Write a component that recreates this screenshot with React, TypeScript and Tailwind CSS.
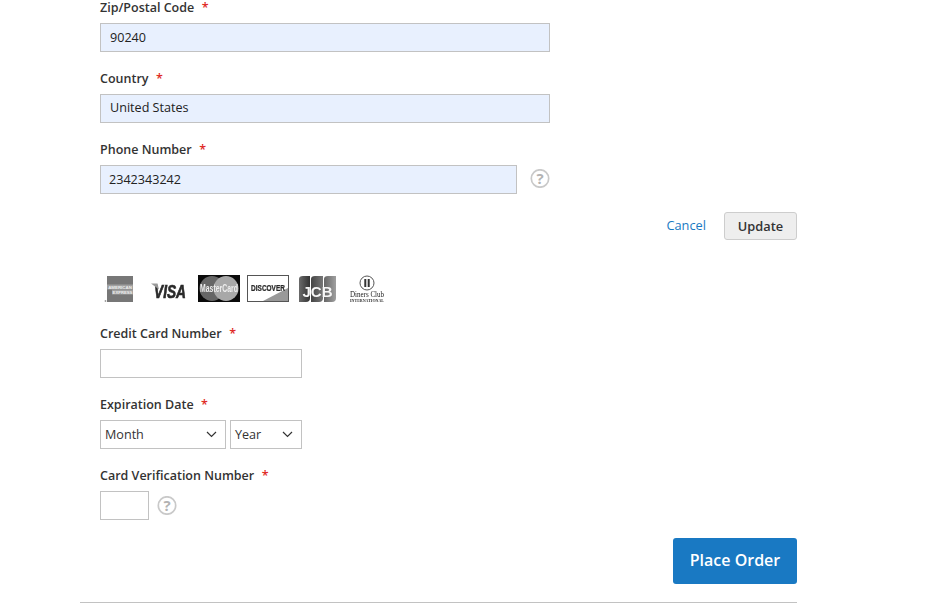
import React from "react";

function Label({ text }: { text: string }) {
  return (
    <div className="h-[16px] flex items-center text-[12.5px] font-semibold leading-[16px] text-[#333]">
      <span>{text}</span>
      <span className="ml-[7.5px] text-[#e02b27]">*</span>
    </div>
  );
}

function Field({ label, value, leading }: { label: string; value: string; leading: string }) {
  return (
    <div className="flex flex-col gap-[7px]">
      <Label text={label} />
      <div className={`w-[450px] h-[29px] border border-[#c2c2c2] bg-[#e8f0fe] pl-[9px] text-[12.6px] ${leading} text-[#222]`}>{value}</div>
    </div>
  );
}

function Help({ className = "" }: { className?: string }) {
  return (
    <svg width="20" height="19" viewBox="0 0 20 19" className={`shrink-0 ${className}`}>
      <circle cx="10" cy="9.5" r="8.7" fill="none" stroke="#c9c9c9" strokeWidth="1.7" />
      <text x="10" y="14.6" textAnchor="middle" fontSize="15" fontWeight="700" fontFamily="Open Sans, sans-serif" fill="#b3b3b3">?</text>
    </svg>
  );
}

function Chevron() {
  return (
    <svg width="11" height="7" viewBox="0 0 11 7" className="shrink-0">
      <path d="M1 1l4.5 4.5L10 1" fill="none" stroke="#333" strokeWidth="1.2" />
    </svg>
  );
}

function Select({ text, width }: { text: string; width: string }) {
  return (
    <div className={`${width} h-[29px] border border-[#c2c2c2] bg-white pl-[4px] pr-[8px] flex items-center justify-between text-[12.6px] text-[#333]`}>
      <span className="pt-[1px]">{text}</span>
      <Chevron />
    </div>
  );
}

function Logos() {
  return (
    <svg width="290" height="32" viewBox="0 0 290 32" className="block blur-[0.5px]" fontFamily="Liberation Sans, sans-serif">
      <defs>
        <linearGradient id="j1" x1="0" x2="1" y1="0" y2="0"><stop offset="0" stopColor="#6a6a6a" /><stop offset="1" stopColor="#333" /></linearGradient>
        <linearGradient id="j2" x1="0" x2="1" y1="0" y2="0"><stop offset="0" stopColor="#444" /><stop offset="1" stopColor="#777" /></linearGradient>
        <linearGradient id="j3" x1="0" x2="1" y1="0" y2="0"><stop offset="0" stopColor="#666" /><stop offset="1" stopColor="#a0a0a0" /></linearGradient>
      </defs>
      {/* Amex */}
      <rect x="7" y="3" width="26" height="26" fill="#777" />
      <rect x="7" y="11.5" width="26" height="5" fill="#a0a0a0" />
      <rect x="12" y="16.5" width="21" height="5" fill="#a0a0a0" />
      <text x="20" y="15.5" textAnchor="middle" fontSize="4.4" fontWeight="700" fill="#eee">AMERICAN</text>
      <text x="22.5" y="20.5" textAnchor="middle" fontSize="4.2" fontWeight="700" fill="#eee">EXPRESS</text>
      <circle cx="5.5" cy="28" r="0.9" fill="#999" />
      {/* Visa */}
      <text transform="translate(70,24.5) scale(0.74,1)" textAnchor="middle" fontSize="18.5" fontWeight="700" fontStyle="italic" fill="#2a2a2a" stroke="#2a2a2a" strokeWidth="0.7">VISA</text>
      <path d="M51 10.5l6.5 0 1.5 6z" fill="#999" />
      {/* Mastercard */}
      <rect x="98" y="2" width="42" height="27" fill="#0a0a0a" />
      <circle cx="112" cy="15.5" r="12.5" fill="#666" />
      <circle cx="126" cy="15.5" r="12.5" fill="#a8a8a8" />
      <text transform="translate(119,19) scale(0.69,1)" textAnchor="middle" fontSize="10" fontWeight="700" fill="#eee">MasterCard</text>
      {/* Discover */}
      <rect x="147.5" y="2.5" width="41" height="26" fill="#fff" stroke="#555" strokeWidth="1" />
      <path d="M163 28 L188 28 L188 15z" fill="#999" />
      <text transform="translate(168,17.5) scale(0.72,1)" textAnchor="middle" fontSize="9" fontWeight="700" fill="#2a2a2a" stroke="#2a2a2a" strokeWidth="0.25">DISCOVER</text>
      {/* JCB */}
      <path d="M199 6q0-3 4-3h7v22q0 4-4 4h-7z" fill="url(#j1)" />
      <path d="M211 6q0-3 4-3h8v22q0 4-4 4h-8z" fill="url(#j2)" />
      <path d="M224 6q0-3 4-3h8v22q0 4-4 4h-8z" fill="url(#j3)" />
      <text x="217.5" y="23.5" textAnchor="middle" fontSize="15" fontWeight="700" fill="#f6f6f6">JCB</text>
      {/* Diners */}
      <circle cx="267" cy="10" r="7" fill="#fff" stroke="#555" strokeWidth="1" />
      <path d="M265.3 6v8M268.7 6v8" stroke="#333" strokeWidth="2" />
      <text transform="translate(267,24) scale(0.78,1)" textAnchor="middle" fontSize="9" fontFamily="Liberation Serif, serif" fill="#222">Diners Club</text>
      <text x="267" y="28.5" textAnchor="middle" fontSize="4" fontWeight="700" fontFamily="Liberation Serif, serif" fill="#333">INTERNATIONAL</text>
    </svg>
  );
}

export default function App() {
  return (
    <div className="h-[613px] w-[930px] overflow-hidden bg-white font-['Open_Sans',sans-serif]">
      <div className="ml-[80px] w-[717px] pl-[20px]">
        <div className="flex flex-col gap-[19px]">
          <Field label="Zip/Postal Code" value="90240" leading="leading-[27px]" />
          <Field label="Country" value="United States" leading="leading-[26px]" />
          <div className="flex flex-col gap-[7px]">
            <Label text="Phone Number" />
            <div className="flex items-center gap-[13px]">
              <div className="w-[417px] h-[29px] border border-[#c2c2c2] bg-[#e8f0fe] pl-[8px] text-[12.6px] leading-[27px] text-[#222]">2342343242</div>
              <Help className="mb-[2px]" />
            </div>
          </div>
        </div>
        <div className="mt-[18px] flex items-center justify-end gap-[18px]">
          <span className="text-[12.8px] text-[#1979c3]">Cancel</span>
          <div className="h-[28px] w-[73px] rounded-[3px] border border-[#cdcdcd] bg-[#eee] text-center text-[12.8px] font-semibold leading-[26px] text-[#333]">Update</div>
        </div>
        <div className="mt-[33px]"><Logos /></div>
        <div className="mt-[21px] flex flex-col gap-[19px]">
          <div className="flex flex-col gap-[7px]">
            <Label text="Credit Card Number" />
            <div className="h-[29px] w-[202px] border border-[#c2c2c2] bg-white" />
          </div>
          <div className="flex flex-col gap-[7px]">
            <Label text="Expiration Date" />
            <div className="flex gap-[4px]">
              <Select text="Month" width="w-[126px]" />
              <Select text="Year" width="w-[72px]" />
            </div>
          </div>
          <div className="flex flex-col gap-[7px]">
            <Label text="Card Verification Number" />
            <div className="flex items-center gap-[8px]">
              <div className="h-[29px] w-[49px] border border-[#c2c2c2] bg-white" />
              <Help />
            </div>
          </div>
        </div>
        <div className="mt-[18px] flex justify-end">
          <div className="h-[46px] w-[124px] rounded-[3px] bg-[#1979c3] text-center text-[16px] font-semibold leading-[44px] text-white">Place Order</div>
        </div>
      </div>
      <div className="ml-[80px] mt-[18px] h-px w-[717px] bg-[#c2c2c2]" />
    </div>
  );
}
